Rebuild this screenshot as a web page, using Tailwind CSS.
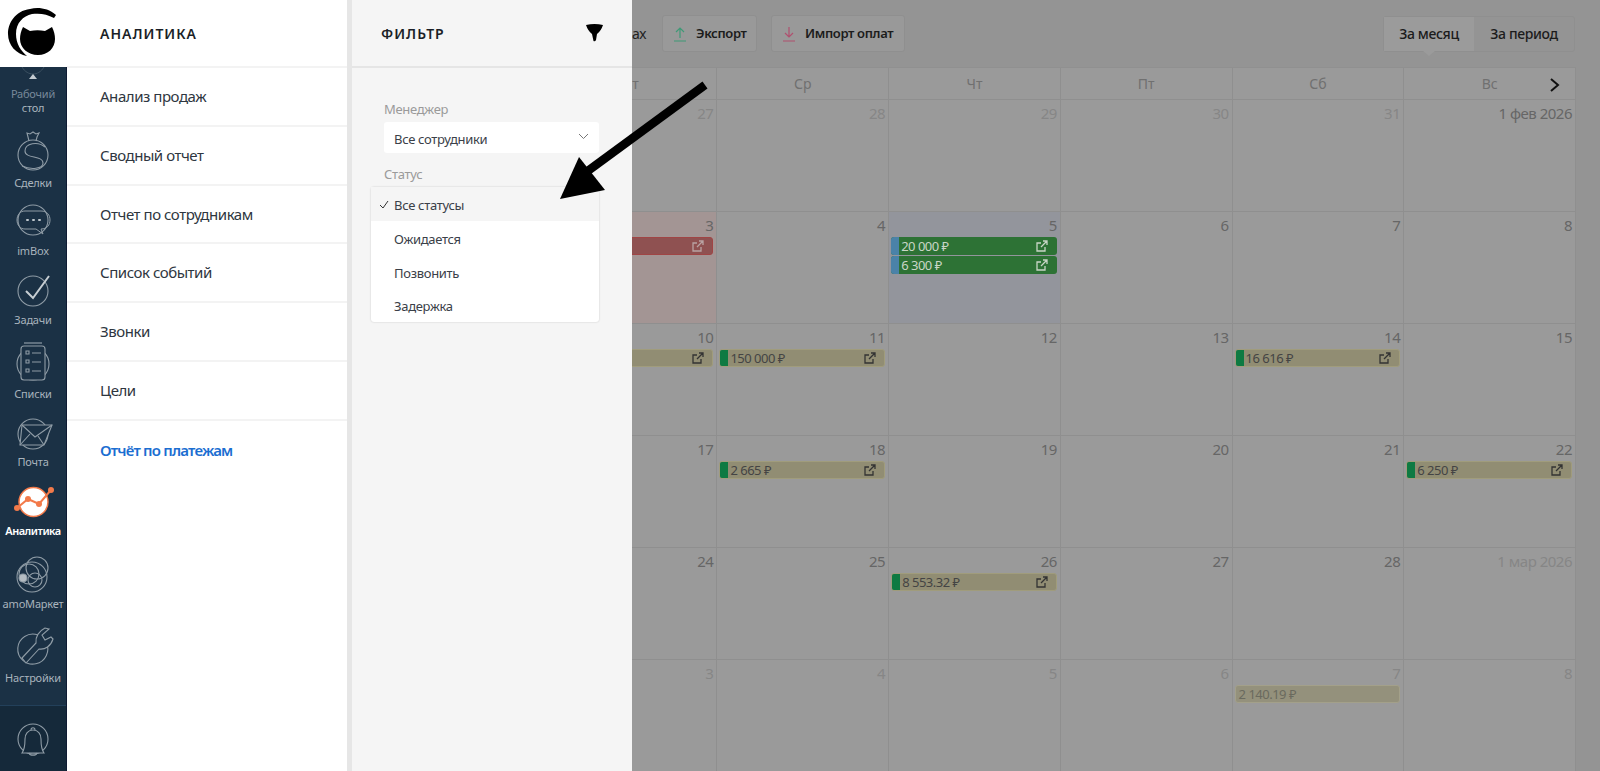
<!doctype html>
<html lang="ru">
<head>
<meta charset="utf-8">
<title>Отчёт по платежам</title>
<script src="https://cdn.jsdelivr.net/npm/@tailwindcss/browser@4"></script>
</head>
<body class="font-['Noto_Sans','DejaVu_Sans',sans-serif] bg-[#949494] overflow-hidden">
<div class="relative w-[1600px] h-[771px] overflow-hidden">

  <!-- Dimmed calendar page -->
  <main class="pl-[374px] w-[1600px] h-[771px] bg-[#949494]">
    <header class="h-[67px] flex items-center pr-[25px] text-[13px] tracking-[-0.35px]">
      <span class="w-[272px] text-right text-[14px] text-[#222]">ах</span>
      <button class="ml-[16px] h-[37px] w-[95px] flex items-center gap-[9px] pl-[10px] rounded-[3px] bg-[#999] border border-[#8f8f8f] text-[#1c1c1c] font-semibold">
        <svg class="w-[14px] h-[16px]" viewBox="0 0 14 16" fill="none" stroke="#3f9a77" stroke-width="1.2"><path d="M7 12V2M3 6l4-4 4 4M1 15h12"/></svg>Экспорт
      </button>
      <button class="ml-[14px] h-[37px] w-[134px] flex items-center gap-[9px] pl-[10px] rounded-[3px] bg-[#999] border border-[#8f8f8f] text-[#1c1c1c] font-semibold">
        <svg class="w-[14px] h-[16px]" viewBox="0 0 14 16" fill="none" stroke="#b0506f" stroke-width="1.2"><path d="M7 1v10M3 7l4 4 4-4M1 15h12"/></svg>Импорт оплат
      </button>
      <div class="ml-auto flex h-[36px] border border-[#8f8f8f] rounded-[3px] text-[14px] font-medium text-[#1c1c1c]">
        <span class="relative w-[90px] flex items-center justify-center bg-[#9b9b9b]">За месяц<i class="absolute left-[39px] top-full w-0 h-0 border-x-[6px] border-x-transparent border-t-[5px] border-t-[#9b9b9b]"></i></span>
        <span class="w-[100px] flex items-center justify-center">За период</span>
      </div>
    </header>

    <div class="relative w-[1202px] bg-[#9a9a9a] border-t border-[#909090]">
      <div class="grid grid-cols-7 h-[32px] text-[14px] text-[#707070] text-center leading-[31px] border-b border-[#8f8f8f]">
        <span class="border-r border-[#8f8f8f]">Пн</span>
        <span class="border-r border-[#8f8f8f]">Вт</span>
        <span class="border-r border-[#8f8f8f]">Ср</span>
        <span class="border-r border-[#8f8f8f]">Чт</span>
        <span class="border-r border-[#8f8f8f]">Пт</span>
        <span class="border-r border-[#8f8f8f]">Сб</span>
        <span class="border-r border-[#8f8f8f]">Вс</span>
      </div>
      <svg class="absolute right-[14px] top-[9px] w-[14px] h-[16px]" viewBox="0 0 14 16" fill="none" stroke="#111" stroke-width="2"><path d="M3 2l7 6-7 6"/></svg>

      <!-- Calendar weeks -->
      <div class="grid grid-cols-7 auto-rows-[112px] text-[15px] text-[#666] tracking-[-0.5px] [&>div]:border-r [&>div]:border-b [&>div]:border-[#8f8f8f] [&>div]:pt-[2px] [&>div]:pl-[2px] [&>div]:pr-[3px] [&>div]:text-right [&>div]:leading-[23px]">
        <div class="text-[#868686]">26</div><div class="text-[#868686]">27</div><div class="text-[#868686]">28</div><div class="text-[#868686]">29</div><div class="text-[#868686]">30</div><div class="text-[#868686]">31</div><div>1 фев 2026</div>

        <div>2</div>
        <div class="bg-[#a39594]">3
          <div class="h-[18px] flex items-center justify-end rounded-[3px] bg-[#8f5151] border border-[#a04545] pr-[8px]">
            <svg class="w-[12px] h-[12px]" viewBox="0 0 12 12" fill="none" stroke="#b9a3a3" stroke-width="1.3"><path d="M9 7v4H1V3h4M5 7l6-6M7 1h4v4"/></svg>
          </div>
        </div>
        <div>4</div>
        <div class="bg-[#93959c]">5
          <div class="h-[18px] flex items-center rounded-[3px] bg-[#2d7235] overflow-hidden text-[#c9d6c7] text-left text-[13px]">
            <i class="w-[8px] h-full bg-[#4a82a8]"></i><span class="ml-[2px] flex-1">20 000 ₽</span>
            <svg class="w-[12px] h-[12px] mr-[9px]" viewBox="0 0 12 12" fill="none" stroke="#c9d6c7" stroke-width="1.3"><path d="M9 7v4H1V3h4M5 7l6-6M7 1h4v4"/></svg>
          </div>
          <div class="mt-[1px] h-[18px] flex items-center rounded-[3px] bg-[#2d7235] overflow-hidden text-[#c9d6c7] text-left text-[13px]">
            <i class="w-[8px] h-full bg-[#4a82a8]"></i><span class="ml-[2px] flex-1">6 300 ₽</span>
            <svg class="w-[12px] h-[12px] mr-[9px]" viewBox="0 0 12 12" fill="none" stroke="#c9d6c7" stroke-width="1.3"><path d="M9 7v4H1V3h4M5 7l6-6M7 1h4v4"/></svg>
          </div>
        </div>
        <div>6</div><div>7</div><div>8</div>

        <div>9</div>
        <div>10
          <div class="h-[18px] flex items-center justify-end rounded-[3px] bg-[#918d73] border border-[#a09c7c] pr-[8px]">
            <svg class="w-[12px] h-[12px]" viewBox="0 0 12 12" fill="none" stroke="#333" stroke-width="1.3"><path d="M9 7v4H1V3h4M5 7l6-6M7 1h4v4"/></svg>
          </div>
        </div>
        <div>11
          <div class="h-[18px] flex items-center rounded-[3px] bg-[#918d73] border border-[#a09c7c] overflow-hidden text-[#444] text-left text-[13px]">
            <i class="w-[8px] h-full bg-[#0e7a42]"></i><span class="ml-[2px] flex-1">150 000 ₽</span>
            <svg class="w-[12px] h-[12px] mr-[8px]" viewBox="0 0 12 12" fill="none" stroke="#333" stroke-width="1.3"><path d="M9 7v4H1V3h4M5 7l6-6M7 1h4v4"/></svg>
          </div>
        </div>
        <div>12</div><div>13</div>
        <div>14
          <div class="h-[18px] flex items-center rounded-[3px] bg-[#918d73] border border-[#a09c7c] overflow-hidden text-[#444] text-left text-[13px]">
            <i class="w-[8px] h-full bg-[#0e7a42]"></i><span class="ml-[2px] flex-1">16 616 ₽</span>
            <svg class="w-[12px] h-[12px] mr-[8px]" viewBox="0 0 12 12" fill="none" stroke="#333" stroke-width="1.3"><path d="M9 7v4H1V3h4M5 7l6-6M7 1h4v4"/></svg>
          </div>
        </div>
        <div>15</div>

        <div>16</div><div>17</div>
        <div>18
          <div class="h-[18px] flex items-center rounded-[3px] bg-[#918d73] border border-[#a09c7c] overflow-hidden text-[#444] text-left text-[13px]">
            <i class="w-[8px] h-full bg-[#0e7a42]"></i><span class="ml-[2px] flex-1">2 665 ₽</span>
            <svg class="w-[12px] h-[12px] mr-[8px]" viewBox="0 0 12 12" fill="none" stroke="#333" stroke-width="1.3"><path d="M9 7v4H1V3h4M5 7l6-6M7 1h4v4"/></svg>
          </div>
        </div>
        <div>19</div><div>20</div><div>21</div>
        <div>22
          <div class="h-[18px] flex items-center rounded-[3px] bg-[#918d73] border border-[#a09c7c] overflow-hidden text-[#444] text-left text-[13px]">
            <i class="w-[8px] h-full bg-[#0e7a42]"></i><span class="ml-[2px] flex-1">6 250 ₽</span>
            <svg class="w-[12px] h-[12px] mr-[8px]" viewBox="0 0 12 12" fill="none" stroke="#333" stroke-width="1.3"><path d="M9 7v4H1V3h4M5 7l6-6M7 1h4v4"/></svg>
          </div>
        </div>

        <div>23</div><div>24</div><div>25</div>
        <div>26
          <div class="h-[18px] flex items-center rounded-[3px] bg-[#918d73] border border-[#a09c7c] overflow-hidden text-[#444] text-left text-[13px]">
            <i class="w-[8px] h-full bg-[#0e7a42]"></i><span class="ml-[2px] flex-1">8 553.32 ₽</span>
            <svg class="w-[12px] h-[12px] mr-[8px]" viewBox="0 0 12 12" fill="none" stroke="#333" stroke-width="1.3"><path d="M9 7v4H1V3h4M5 7l6-6M7 1h4v4"/></svg>
          </div>
        </div>
        <div>27</div><div>28</div><div class="text-[#868686]">1 мар 2026</div>

        <div class="text-[#868686]">2</div><div class="text-[#868686]">3</div><div class="text-[#868686]">4</div><div class="text-[#868686]">5</div><div class="text-[#868686]">6</div>
        <div class="text-[#868686]">7
          <div class="h-[18px] flex items-center rounded-[3px] bg-[#94917c] border border-[#a3a08a] pl-[3px] text-[#6a6a5e] text-left text-[13px]">2 140.19 ₽</div>
        </div>
        <div class="text-[#868686]">8</div>
      </div>
    </div>
  </main>

  <!-- Panels lying over the page -->
  <div class="absolute inset-y-0 left-0 flex h-[771px]">
    <!-- Icon rail -->
    <nav class="w-[67px] flex flex-col border-r border-[#0e1a33] bg-[#1b3145] text-[11px] tracking-[-0.2px] leading-[14px] text-[#a9b4bd] text-center">
      <div class="h-[67px] bg-white -mr-[1px]">
        <svg class="w-[67px] h-[67px]" viewBox="0 0 67 67" fill="#000"><path d="M56 15C48 8 38 7 30 9 15 11 8 23 8 34c0 11 8 20 19 22-6-5-11-12-11-22 0-11 7-18 16-20 8-1 15 0 22 4z"/><path d="M23 27l7 4c5-1 10-1 15 0l7-4c2 4 3 8 3 12 0 9-7 16-17 16s-18-7-18-16c0-4 1-8 3-12z"/></svg>
      </div>
      <div class="h-[48px] flex flex-col items-center justify-end relative">
        <svg class="absolute top-0 left-[11px] w-[44px] h-[14px]" viewBox="0 0 44 14" fill="none"><path d="M11 0c3 5 7 7 11 7s8-2 11-7" stroke="#3c5162"/><path d="M22 7l4 5h-8z" fill="#c4cbd1"/></svg>
        <span class="text-[#78899a]">Рабочий</span><span>стол</span>
      </div>
      <a class="h-[75px] flex flex-col items-center justify-end">
        <svg class="w-[44px] h-[44px] mb-[2px]" viewBox="0 0 44 44" fill="none" stroke="#8f9ca6" stroke-width="1.1"><path d="M18 11l-1-4-1-4 3 1 3-2 3 2 3-1-2 4-1 4"/><circle cx="22" cy="25" r="15"/><path d="M34 17c-7-6-20-4-20 4 0 8 18 4 18 12 0 6-12 7-21 3"/></svg>
        <span>Сделки</span>
      </a>
      <a class="h-[68px] flex flex-col items-center justify-end">
        <svg class="w-[44px] h-[44px] mb-[2px]" viewBox="0 0 44 44" fill="none" stroke="#8f9ca6" stroke-width="1.1"><circle cx="22" cy="22" r="15"/><path d="M14 13h16c6 0 9 4 9 9s-3 9-9 9l2 5-7-5H14C9 31 6 27 6 22s3-9 8-9z" stroke-width="1"/><path d="M16 22h1M22 22h1M28 22h1" stroke="#c0c8ce" stroke-width="2" stroke-linecap="round"/></svg>
        <span>imBox</span>
      </a>
      <a class="h-[69px] flex flex-col items-center justify-end">
        <svg class="w-[44px] h-[44px] mb-[2px]" viewBox="0 0 44 44" fill="none" stroke="#8f9ca6" stroke-width="1.1"><circle cx="22" cy="24" r="15"/><path d="M15 24l7 7L38 9" stroke="#c7ced3" stroke-width="2"/></svg>
        <span>Задачи</span>
      </a>
      <a class="h-[74px] flex flex-col items-center justify-end">
        <svg class="w-[44px] h-[44px] mb-[2px]" viewBox="0 0 44 44" fill="none" stroke="#8f9ca6" stroke-width="1.1"><circle cx="22" cy="23" r="16"/><path d="M13 2h18" stroke-width="1.2"/><rect x="10" y="5" width="24" height="34" rx="3" fill="#1b3145"/><path d="M15 10h3v3h-3zM15 19h3v3h-3zM15 28h3v3h-3zM21 12h9M21 21h9M21 30h9"/></svg>
        <span>Списки</span>
      </a>
      <a class="h-[68px] flex flex-col items-center justify-end">
        <svg class="w-[44px] h-[44px] mb-[2px]" viewBox="0 0 44 44" fill="none" stroke="#8f9ca6" stroke-width="1.1"><circle cx="22" cy="25" r="15"/><path d="M11 16h30l-8 20H9z" fill="#1b3145"/><path d="M11 16l13 12 17-12M9 36l10-11M33 36l-6-9"/></svg>
        <span>Почта</span>
      </a>
      <a class="h-[69px] flex flex-col items-center justify-end">
        <svg class="w-[44px] h-[44px] mb-[2px]" viewBox="0 0 44 44" fill="none"><circle cx="22.5" cy="24" r="14.5" fill="#fff" stroke="#f37a4a" stroke-width="1.5"/><path d="M6 30l11-9 11 5 12-14" stroke="#f37a4a" stroke-width="2"/><circle cx="6" cy="30" r="3" fill="#f37a4a"/><circle cx="17" cy="21" r="3" fill="#f37a4a"/><circle cx="28" cy="26" r="3" fill="#f37a4a"/><circle cx="40" cy="12" r="3" fill="#f37a4a"/></svg>
        <span class="font-semibold text-white tracking-[-0.5px]">Аналитика</span>
      </a>
      <a class="h-[73px] flex flex-col items-center justify-end">
        <svg class="w-[44px] h-[44px] mb-[2px]" viewBox="0 0 44 44" fill="none" stroke="#8f9ca6" stroke-width="1.1"><circle cx="21" cy="26" r="15"/><circle cx="26" cy="17" r="11"/><circle cx="18" cy="23" r="10"/><circle cx="24" cy="29" r="7"/><circle cx="12" cy="27" r="4" fill="#b4bcc2"/></svg>
        <span class="whitespace-nowrap">amoМаркет</span>
      </a>
      <a class="h-[74px] flex flex-col items-center justify-end">
        <svg class="w-[44px] h-[44px] mb-[2px]" viewBox="0 0 44 44" fill="none" stroke="#8f9ca6" stroke-width="1.1"><path d="M27 10A15 15 0 1 0 35 17"/><path d="M11 33l14-15c-1-6 3-12 9-15l4 1-7 6 3 5 6-3 2 2c-2 7-8 11-14 10L15 38z" fill="#1b3145"/></svg>
        <span>Настройки</span>
      </a>
      <div class="flex-1"></div>
      <div class="h-[66px] bg-[#15293a] border-t border-[#23405a] flex justify-center pt-[11px]">
        <svg class="w-[44px] h-[44px]" viewBox="0 0 44 44" fill="none" stroke="#8f9ca6" stroke-width="1.1"><circle cx="22" cy="22" r="15"/><path d="M11 36c3-4 3-9 3-14 0-5 3-9 8-9s8 4 8 9c0 5 0 10 3 14z" fill="#15293a"/><path d="M18 36c1 3 7 3 8 0M20 13c0-3 4-3 4 0"/></svg>
      </div>
    </nav>

    <!-- Section menu -->
    <aside class="w-[285px] bg-white border-r-[5px] border-[#e6e6e6] text-[15px] tracking-[-0.45px] text-[#2e3640]">
      <div class="h-[68px] flex items-center pl-[33px] text-[14px] font-semibold tracking-[1px] text-[#1b1f27] border-b-2 border-[#f3f3f3]">АНАЛИТИКА</div>
      <a class="h-[58.75px] flex items-center pl-[33px] border-b-2 border-[#f3f3f3]">Анализ продаж</a>
      <a class="h-[58.75px] flex items-center pl-[33px] border-b-2 border-[#f3f3f3]">Сводный отчет</a>
      <a class="h-[58.75px] flex items-center pl-[33px] border-b-2 border-[#f3f3f3]">Отчет по сотрудникам</a>
      <a class="h-[58.75px] flex items-center pl-[33px] border-b-2 border-[#f3f3f3]">Список событий</a>
      <a class="h-[58.75px] flex items-center pl-[33px] border-b-2 border-[#f3f3f3]">Звонки</a>
      <a class="h-[58.75px] flex items-center pl-[33px] border-b-2 border-[#f3f3f3]">Цели</a>
      <a class="h-[58.75px] flex items-center pl-[33px] font-semibold tracking-[-0.8px] text-[#1b6ed1]">Отчёт по платежам</a>
    </aside>

    <!-- Filter panel -->
    <section class="w-[280px] bg-[#f5f5f5] text-[13px] tracking-[-0.3px]">
      <div class="h-[68px] flex items-center justify-between pl-[29px] pr-[29px] border-b-2 border-[#e5e5e5]">
        <span class="text-[14px] font-semibold tracking-[1px] text-[#1b1f27]">ФИЛЬТР</span>
        <svg class="w-[17px] h-[18px]" viewBox="0 0 17 18" fill="#000"><path d="M0 1Q8.5-1 17 1Q15 7 11 10L10 16Q9 18 7.5 17L6 10Q2 7 0 1z"/></svg>
      </div>
      <div class="pl-[32px] pr-[33px] pt-[32px]">
        <div class="text-[#9a9a9a] leading-[18px]">Менеджер</div>
        <div class="mt-[4px] h-[31px] flex items-center justify-between pl-[10px] pr-[10px] pt-[4px] bg-white rounded-[3px] text-[#3a4048]">
          Все сотрудники
          <svg class="w-[11px] h-[7px] -mt-[7px]" viewBox="0 0 11 7" fill="none" stroke="#777" stroke-width="1"><path d="M1 1l4.5 4.5L10 1"/></svg>
        </div>
        <div class="mt-[12px] text-[#9a9a9a] leading-[18px]">Статус</div>
      </div>
      <ul class="relative mt-[4px] ml-[19px] mr-[33px] bg-white rounded-[3px] shadow-[0_0_2px_rgba(0,0,0,0.2)] text-[#3a4048] [&>li]:h-[33.75px] [&>li]:flex [&>li]:items-center [&>li]:pl-[23px] [&>li]:pt-[4px]">
        <li class="relative bg-[#f5f5f5]">
          <svg class="absolute left-[8px] top-[13px] w-[10px] h-[9px]" viewBox="0 0 10 9" fill="none" stroke="#333" stroke-width="1"><path d="M1 5l3 3 5-7"/></svg>
          Все статусы
        </li>
        <li>Ожидается</li>
        <li>Позвонить</li>
        <li>Задержка</li>
      </ul>
    </section>
  </div>

  <!-- Annotation arrow -->
  <svg class="absolute left-[550px] top-[75px] w-[165px] h-[135px]" viewBox="550 75 165 135" fill="#000"><path d="M705 85L585 173" stroke="#000" stroke-width="8.5" fill="none"/><path d="M560 199L579 157 605 190z"/></svg>
</div>
</body>
</html>
